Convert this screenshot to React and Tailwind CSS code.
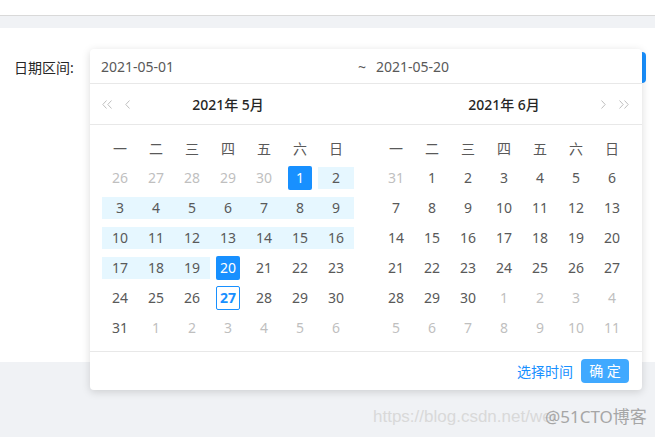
import React from 'react';

const FONT = { fontFamily: '"Noto Sans", "Noto Sans CJK SC", sans-serif' };
const WEEK = ['一', '二', '三', '四', '五', '六', '日'];

// each cell: { d, cur }
function buildMonth(prevTail, days, nextCount) {
  const cells = [];
  prevTail.forEach((d) => cells.push({ d, cur: false }));
  for (let i = 1; i <= days; i++) cells.push({ d: i, cur: true });
  for (let i = 1; i <= nextCount; i++) cells.push({ d: i, cur: false });
  const rows = [];
  for (let i = 0; i < cells.length; i += 7) rows.push(cells.slice(i, i + 7));
  return rows;
}

const MAY = buildMonth([26, 27, 28, 29, 30], 31, 6);
const JUNE = buildMonth([31], 30, 11);

function Chevron({ dir = 'left', double = false }) {
  const pts = dir === 'left' ? 'M4.5 0.5 L0.8 4.5 L4.5 8.5' : 'M0.5 0.5 L4.2 4.5 L0.5 8.5';
  return (
    <svg width={double ? 10 : 5} height="9" viewBox={double ? '0 0 10 9' : '0 0 5 9'} fill="none" stroke="#bfbfbf" strokeWidth="1">
      <path d={pts} />
      {double && <path d={pts} transform="translate(5 0)" />}
    </svg>
  );
}

function DayCell({ cell, month }) {
  const isMay = month === 5 && cell.cur;
  const selected = isMay && (cell.d === 1 || cell.d === 20);
  const inRange = isMay && cell.d > 1 && cell.d < 20;
  const today = isMay && cell.d === 27;

  let num = 'text-[#595959]';
  if (!cell.cur) num = 'text-[#bfbfbf]';
  if (selected) num = 'bg-[#1890ff] text-white rounded-[2px]';
  if (today) num = 'border border-[#1890ff] text-[#1890ff] font-bold rounded-[2px]';

  return (
    <div className="relative h-[30px] flex items-center justify-center">
      {inRange && <div className="absolute left-0 right-0 top-[4px] h-[22px] bg-[#e6f7ff]" />}
      <span className={`relative w-[24px] h-[24px] flex items-center justify-center text-[14px] leading-none ${num}`}>
        {cell.d}
      </span>
    </div>
  );
}

function Panel({ rows, month }) {
  return (
    <div className="w-[276px] px-[12px] py-[8px]">
      <div className="grid grid-cols-7">
        {WEEK.map((w) => (
          <div key={w} className="h-[30px] flex items-center justify-center text-[14px] text-[#595959]">
            {w}
          </div>
        ))}
      </div>
      {rows.map((r, i) => (
        <div key={i} className="grid grid-cols-7">
          {r.map((c, j) => (
            <DayCell key={j} cell={c} month={month} />
          ))}
        </div>
      ))}
    </div>
  );
}

export default function App() {
  return (
    <div className="relative w-[655px] h-[437px] bg-white overflow-hidden" style={FONT}>
      {/* top strip */}
      <div className="h-[15px] bg-white" />
      <div className="h-[1px] bg-[#d9d9d9]" />
      <div className="h-[12px] bg-[#f0f2f5]" />

      {/* content */}
      <div className="relative h-[334px] bg-white">
        <div className="absolute left-[14px] top-[30px] text-[14px] text-[#262626] leading-[20px]">日期区间:</div>

        {/* focused input edge peeking behind popup */}
        <div className="absolute left-[638px] top-[24px] w-[8px] h-[31px] bg-[#1890ff] rounded-r-[4px]" />

        <div className="absolute left-[90px] top-[21px] w-[552px] bg-white rounded-[4px] shadow-[0_2px_8px_rgba(0,0,0,0.15)]">
          {/* input row */}
          <div className="h-[35px] flex items-center border-b border-[#e8e8e8] text-[14px] text-[#595959]">
            <div className="w-[266px] pl-[11px]">2021-05-01</div>
            <span className="w-[12px] text-center">~</span>
            <div className="pl-[8px]">2021-05-20</div>
          </div>

          {/* header row */}
          <div className="h-[41px] flex border-b border-[#e8e8e8]">
            <div className="relative w-[276px] flex items-center justify-center">
              <div className="absolute left-[12px] top-0 h-full flex items-center gap-[13px]">
                <Chevron dir="left" double />
                <Chevron dir="left" />
              </div>
              <span className="text-[14px] font-medium text-[#262626]">2021年 5月</span>
            </div>
            <div className="relative w-[276px] flex items-center justify-center">
              <span className="text-[14px] font-medium text-[#262626]">2021年 6月</span>
              <div className="absolute right-[13px] top-0 h-full flex items-center gap-[13px]">
                <Chevron dir="right" />
                <Chevron dir="right" double />
              </div>
            </div>
          </div>

          {/* body */}
          <div className="flex border-b border-[#e8e8e8]">
            <Panel rows={MAY} month={5} />
            <Panel rows={JUNE} month={6} />
          </div>

          {/* footer */}
          <div className="h-[38px] flex items-center justify-end pr-[13px] gap-[8px]">
            <span className="text-[14px] text-[#1890ff]">选择时间</span>
            <button className="w-[48px] h-[24px] bg-[#40a9ff] text-white text-[14px] rounded-[4px] leading-none">
              确 定
            </button>
          </div>
        </div>
      </div>

      <div className="h-[76px] bg-[#f0f2f5]" />

      {/* watermark */}
      <div className="absolute left-[373px] top-[406px] text-[17px] text-[#d9d9d9] leading-[22px]" style={{ fontFamily: '"Liberation Sans", sans-serif' }}>
        https://blog.csdn.net/wei
      </div>
      <div className="absolute left-[545px] top-[406px] text-[17px] text-[#a6a6a6] leading-[22px]">
        @51CTO博客
      </div>
    </div>
  );
}
